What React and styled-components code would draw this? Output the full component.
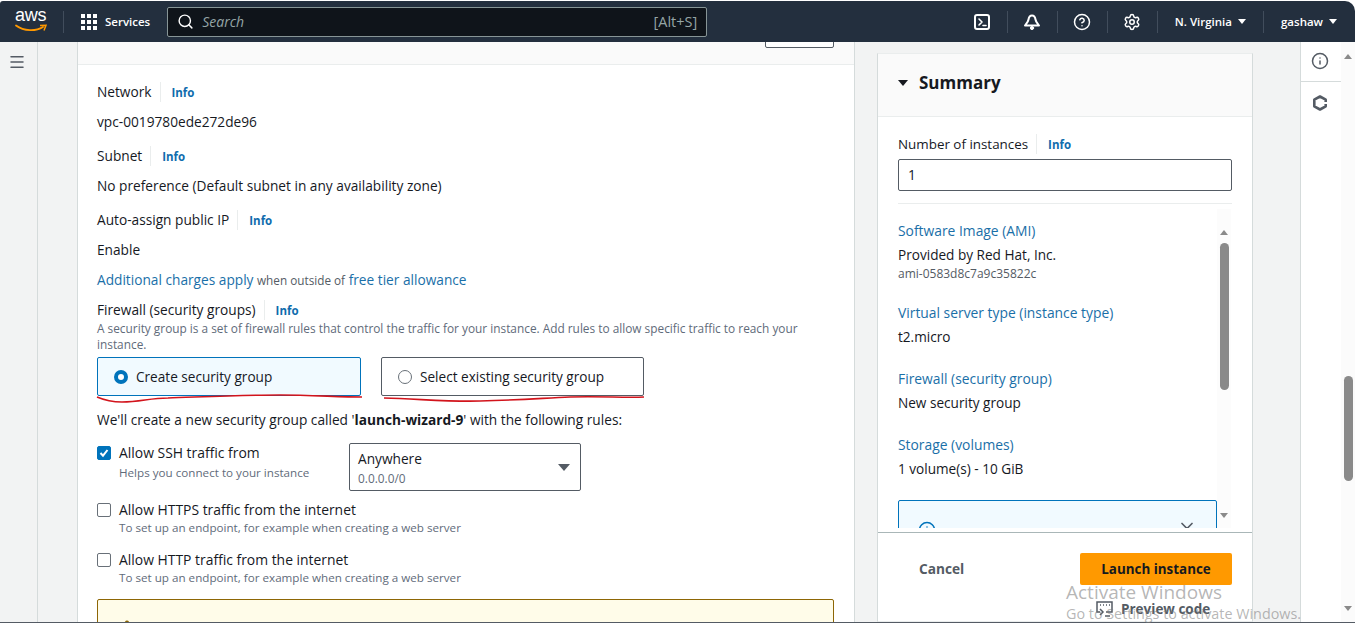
import React from 'react';
import styled, { createGlobalStyle } from 'styled-components';
import { Settings, CircleHelp, Info as InfoIcon, Search, ChevronDown, Menu, TriangleAlert } from 'lucide-react';

const GlobalStyle = createGlobalStyle`
    html, body {
        margin: 0;
        padding: 0;
        background: #fff;
        overflow: hidden;
    }
    * { box-sizing: border-box; }
`;

const Page = styled.div`
    position: relative;
    width: 1359px;
    height: 623px;
    overflow: hidden;
    font-family: "Open Sans", "Noto Sans", sans-serif;
    font-size: 13.7px;
    line-height: 20px;
    color: #16191f;
    background: #fff;
`;

const Frame = styled.div`
    width: 1355px;
    height: 623px;
    display: flex;
    flex-direction: column;
    border-bottom: 1px solid #545b64;
`;

const Header = styled.header`
    flex: none;
    height: 41px;
    margin-top: 1px;
    display: flex;
    align-items: center;
    background: #232f3e;
    border-top-right-radius: 10px;
    border-top-left-radius: 3px;
    color: #fff;
`;

const Logo = styled.div`
    position: relative;
    width: 32px;
    height: 26px;
    margin-left: 15px;
    flex: none;
`;

const LogoWord = styled.span`
    display: block;
    font-family: "Liberation Sans", sans-serif;
    font-size: 18px;
    line-height: 16px;
    letter-spacing: -0.3px;
    margin-top: -2px;
`;

const LogoSmile = styled.svg`
    position: absolute;
    left: 0;
    top: 15px;
`;

const Divider = styled.span`
    flex: none;
    width: 1px;
    height: 22px;
    background: #414d5c;
    margin-left: ${p => p.$left || 0}px;
`;

const Services = styled.div`
    display: flex;
    align-items: center;
    gap: 8px;
    margin-left: 17px;
    font-size: 11.5px;
    font-weight: 600;
`;

const SearchBox = styled.div`
    width: 540px;
    height: 30px;
    margin-left: 17px;
    padding: 0 9px;
    display: flex;
    align-items: center;
    background: #0f141a;
    border: 1px solid #879596;
    border-radius: 2px;
    font-size: 14px;
    color: #95a5a6;
`;

const SearchHint = styled.span`
    font-style: italic;
    margin-left: 8px;
    flex: 1;
`;

const ShortCut = styled.span`
    font-size: 14.5px;
`;

const HeaderRight = styled.div`
    margin-left: auto;
    display: flex;
    align-items: center;
`;

const HeaderIcon = styled.span`
    width: 49px;
    display: flex;
    justify-content: center;
    align-items: center;
`;

const HeaderMenu = styled.span`
    display: flex;
    align-items: center;
    gap: 6px;
    font-size: 11.5px;
    font-weight: 600;
    margin: ${p => p.$margin};
`;

const Caret = styled.span`
    display: inline-block;
    width: 0;
    height: 0;
    border-left: ${p => p.$size}px solid transparent;
    border-right: ${p => p.$size}px solid transparent;
    border-top: ${p => p.$size + 1}px solid ${p => p.$color || '#fff'};
`;

const Body = styled.div`
    flex: 1;
    min-height: 0;
    display: flex;
    background: #f2f3f3;
`;

const SideNav = styled.nav`
    flex: none;
    width: 38px;
    padding: 11px 0 0 8px;
    border-right: 1px solid #d5dbdb;
    color: #545b64;
`;

const Content = styled.main`
    flex: 1;
    min-width: 0;
    display: flex;
    align-items: stretch;
    padding-left: 39px;
`;

const LeftPanel = styled.section`
    flex: none;
    width: 778px;
    background: #fff;
    border-left: 1px solid #d5dbdb;
    border-right: 1px solid #d5dbdb;
    overflow: hidden;
`;

const PanelTop = styled.div`
    height: 23px;
    background: #fafafa;
    border-bottom: 1px solid #eaeded;
    position: relative;
`;

const CutButton = styled.div`
    position: absolute;
    left: 687px;
    top: -19px;
    width: 69px;
    height: 25px;
    background: #fff;
    border: 1px solid #545b64;
    border-radius: 2px;
`;

const PanelBody = styled.div`
    padding: 17px 20px 0 19px;
    display: flex;
    flex-direction: column;
`;

const Field = styled.div`
    display: flex;
    flex-direction: column;
    gap: 10px;
    margin-bottom: ${p => p.$gap ?? 14}px;
`;

const LabelRow = styled.div`
    display: flex;
    align-items: center;
`;

const Label = styled.span`
    padding-right: 8px;
    border-right: 1px solid #eaeded;
`;

const InfoLink = styled.a`
    margin-left: 11px;
    padding-top: 2px;
    font-size: 11.5px;
    line-height: 16px;
    font-weight: 700;
    color: #0f6cad;
`;

const Link = styled.a`
    color: #1a6fa8;
`;

const SmallText = styled.span`
    font-size: 11.75px;
    color: #545b64;
`;

const Hint = styled.div`
    font-size: 11.85px;
    line-height: 16px;
    color: #5f6b7a;
`;

const CheckHint = styled(Hint)`
    font-size: 11.65px;
    margin-top: ${p => p.$top || 0}px;
`;

const RadioRow = styled.div`
    display: flex;
    gap: 20px;
    margin: 5px 0 14px;
`;

const RadioCard = styled.div`
    height: 39px;
    width: ${p => p.$width}px;
    padding-left: ${p => p.$pad}px;
    display: flex;
    align-items: center;
    gap: 8px;
    background: ${p => p.$on ? '#f1faff' : '#fff'};
    border: 1px solid ${p => p.$on ? '#0073bb' : '#545b64'};
    border-radius: 2px;
    font-size: 13.6px;
`;

const RadioDot = styled.span`
    width: 14px;
    height: 14px;
    flex: none;
    border-radius: 50%;
    background: #fff;
    border: ${p => p.$on ? '4px solid #0073bb' : '1px solid #687078'};
`;

const SshRow = styled.div`
    display: flex;
    align-items: flex-start;
    margin-bottom: 9px;
`;

const CheckRow = styled.div`
    display: flex;
    gap: 8px;
    width: 252px;
    margin-bottom: ${p => p.$gap || 0}px;
`;

const CheckBox = styled.span`
    width: 14px;
    height: 14px;
    margin-top: 3px;
    flex: none;
    display: flex;
    align-items: center;
    justify-content: center;
    border-radius: 2px;
    background: ${p => p.$on ? '#0073bb' : '#fff'};
    border: 1px solid ${p => p.$on ? '#0073bb' : '#687078'};
`;

const CheckText = styled.div`
    font-size: 13.9px;
    white-space: nowrap;
`;

const SelectBox = styled.div`
    width: 232px;
    height: 48px;
    padding: 4px 11px 0 8px;
    position: relative;
    background: #fff;
    border: 1px solid #545b64;
    border-radius: 2px;
    font-size: 13.7px;
`;

const SelectValue = styled.div`
    line-height: 21px;
    margin-bottom: 1px;
`;

const SelectCaret = styled.span`
    position: absolute;
    right: 10px;
    top: 20px;
    display: flex;
`;

const WarningBox = styled.div`
    margin-top: 2px;
    height: 40px;
    padding: 19px 0 0 20px;
    background: #fffce9;
    border: 1px solid #8d6605;
    border-radius: 2px;
    color: #8d6605;
`;

const SummaryWrap = styled.aside`
    flex: none;
    width: 376px;
    margin: 11px 0 0 22px;
    background: #fff;
    border: 1px solid #eaeded;
    border-left: 1px solid #d5dbdb;
    border-right: 1px solid #d5dbdb;
    display: flex;
    flex-direction: column;
`;

const SummaryHead = styled.div`
    height: 63px;
    flex: none;
    display: flex;
    align-items: center;
    gap: 11px;
    padding: 0 0 4px 20px;
    background: #fafafa;
    border-bottom: 1px solid #eaeded;
    font-size: 17px;
    font-weight: 700;
`;

const SummaryBody = styled.div`
    padding: 17px 20px 0;
    flex: none;
    font-size: 13.4px;
`;

const NumberInput = styled.div`
    height: 32px;
    margin-top: 5px;
    padding: 5px 9px;
    background: #fff;
    border: 1px solid #545b64;
    border-radius: 2px;
    font-size: 13.7px;
`;

const Rule = styled.div`
    height: 1px;
    margin-top: 12px;
    background: #eaeded;
`;

const ScrollArea = styled.div`
    height: 319px;
    margin-top: 5px;
    margin-right: 21px;
    padding-left: 20px;
    flex: none;
    display: flex;
    overflow: hidden;
`;

const ScrollList = styled.div`
    width: 319px;
    padding-top: 12px;
    flex: none;
`;

const SummaryItem = styled.div`
    margin-bottom: ${p => p.$gap}px;
    font-size: 13.6px;
`;

const ItemLink = styled(Link)`
    display: block;
    margin-bottom: 4px;
    font-size: 13.85px;
`;

const AmiId = styled.div`
    margin-top: 1px;
    font-size: 12px;
    line-height: 16px;
    color: #545b64;
`;

const NoticeBox = styled.div`
    position: relative;
    height: 60px;
    margin-top: -1px;
    background: #f1faff;
    border: 1px solid #0073bb;
    border-radius: 2px;
`;

const NoticeIcon = styled.span`
    position: absolute;
    left: 19px;
    top: 20px;
    display: flex;
    color: #0073bb;
`;

const NoticeChevron = styled.span`
    position: absolute;
    right: 19px;
    top: 15px;
    display: flex;
    color: #545b64;
`;

const Track = styled.div`
    flex: 1;
    padding-top: 21px;
    background: #fcfcfc;
    display: flex;
    flex-direction: column;
    align-items: center;
`;

const TrackThumb = styled.div`
    flex: none;
    width: ${p => p.$width}px;
    height: ${p => p.$height}px;
    margin-top: ${p => p.$top}px;
    background: #8a8a8a;
    border-radius: 5px;
`;

const TrackArrow = styled.span`
    flex: none;
    width: 0;
    height: 0;
    border-left: 4.5px solid transparent;
    border-right: 4.5px solid transparent;
    ${p => p.$down ? 'border-top' : 'border-bottom'}: 5px solid #8a8a8a;
    margin-top: ${p => p.$top || 0}px;
`;

const SummaryFoot = styled.div`
    flex: 1;
    margin-top: 4px;
    border-top: 1px solid #aab7b8;
    padding: 20px 20px 0;
    position: relative;
`;

const FootRow = styled.div`
    display: flex;
    justify-content: space-between;
    align-items: center;
`;

const CancelButton = styled.span`
    margin-left: 21px;
    font-size: 13.7px;
    font-weight: 700;
    color: #545b64;
`;

const LaunchButton = styled.span`
    width: 152px;
    height: 32px;
    display: flex;
    align-items: center;
    justify-content: center;
    background: #ff9900;
    border-radius: 2px;
    font-size: 13.4px;
    font-weight: 700;
    color: #16191f;
`;

const PreviewCode = styled.div`
    margin-top: 14px;
    padding-left: 198px;
    display: flex;
    align-items: center;
    gap: 8px;
    font-size: 13.5px;
    font-weight: 700;
    color: #545b64;
`;

const ToolRail = styled.div`
    flex: none;
    width: 41px;
    margin-left: 47px;
    background: #fff;
    border-left: 1px solid #d5dbdb;
    padding: 10px 2px 0 0;
    display: flex;
    flex-direction: column;
    align-items: center;
    color: #545b64;
`;

const RailDivider = styled.div`
    align-self: flex-start;
    width: 40px;
    height: 1px;
    margin: 11px 0 13px;
    background: #d5dbdb;
`;

const PageScroll = styled.div`
    flex: none;
    width: 14px;
    padding-top: 12px;
    background: #fbfbfb;
    display: flex;
    flex-direction: column;
    align-items: center;
`;

const Scribble = styled.svg`
    position: absolute;
    left: 0;
    top: 0;
    pointer-events: none;
`;

const Watermark = styled.div`
    position: absolute;
    left: 1066px;
    top: 579px;
    color: rgba(120, 120, 120, 0.55);
    pointer-events: none;
    white-space: nowrap;
`;

const WatermarkTitle = styled.div`
    font-size: 19px;
    line-height: 26px;
`;

const WatermarkSub = styled.div`
    font-size: 14.35px;
    line-height: 18px;
`;

const HeadIconOutline = ({ children }) => (
    <svg width="18" height="18" viewBox="0 0 18 18" fill="none" stroke="#fff" strokeWidth="2" strokeLinejoin="round" strokeLinecap="round">
        {children}
    </svg>
);

const fields = [
    { label: 'Network', value: 'vpc-0019780ede272de96', gap: 14 },
    { label: 'Subnet', value: 'No preference (Default subnet in any availability zone)', gap: 14 },
    { label: 'Auto-assign public IP', value: 'Enable', gap: 10 },
];

const summaryItems = [
    { title: 'Software Image (AMI)', text: 'Provided by Red Hat, Inc.', sub: 'ami-0583d8c7a9c35822c', gap: 21 },
    { title: 'Virtual server type (instance type)', text: 't2.micro', gap: 22 },
    { title: 'Firewall (security group)', text: 'New security group', gap: 22 },
    { title: 'Storage (volumes)', text: '1 volume(s) - 10 GiB', gap: 22 },
];

const TickMark = () => (
    <svg width="10" height="10" viewBox="0 0 10 10" fill="none" stroke="#fff" strokeWidth="2">
        <path d="M1.5 5 L4 7.7 L8.5 2" />
    </svg>
);

const App = () => {
    return (
        <Page>
            <GlobalStyle />
            <Frame>
                <Header>
                    <Logo>
                        <LogoWord>aws</LogoWord>
                        <LogoSmile width="32" height="9" viewBox="0 0 32 9" fill="none">
                            <path d="M1 1.5 C9 7.5 21 7.5 28 3" stroke="#ff9900" strokeWidth="1.8" strokeLinecap="round" />
                            <path d="M25 1.5 L31 1.2 L29 6.5" stroke="#ff9900" strokeWidth="1.5" />
                        </LogoSmile>
                    </Logo>
                    <Divider $left={16} />
                    <Services>
                        <svg width="16" height="16" viewBox="0 0 16 16" fill="#fff">
                            {[0, 6, 12].map(x => [0, 6, 12].map(y => (
                                <rect key={`${x}-${y}`} x={x} y={y} width="4" height="4" />
                            )))}
                        </svg>
                        Services
                    </Services>
                    <SearchBox>
                        <Search size={17} color="#fff" strokeWidth={2} />
                        <SearchHint>Search</SearchHint>
                        <ShortCut>[Alt+S]</ShortCut>
                    </SearchBox>
                    <HeaderRight>
                        <HeaderIcon>
                            <HeadIconOutline>
                                <rect x="2" y="2" width="14" height="14" rx="2" />
                                <path d="M6 6 L9 9 L6 12 M10 12.5 H13" strokeWidth="1.6" />
                            </HeadIconOutline>
                        </HeaderIcon>
                        <Divider />
                        <HeaderIcon>
                            <HeadIconOutline>
                                <path d="M9 2.5 C6.5 2.5 5.8 4.5 5.5 6.5 C5.2 8.8 3.5 10.5 2 12.5 H16 C14.5 10.5 12.8 8.8 12.5 6.5 C12.2 4.5 11.5 2.5 9 2.5 Z" />
                                <circle cx="9" cy="15" r="1.6" fill="#fff" strokeWidth="1" />
                            </HeadIconOutline>
                        </HeaderIcon>
                        <Divider />
                        <HeaderIcon><CircleHelp size={18} strokeWidth={2} /></HeaderIcon>
                        <Divider />
                        <HeaderIcon><Settings size={18} strokeWidth={2} /></HeaderIcon>
                        <Divider />
                        <HeaderMenu $margin="0 17px 0 17px">N. Virginia <Caret $size={4.5} /></HeaderMenu>
                        <Divider />
                        <HeaderMenu $margin="0 18px 0 17px">gashaw <Caret $size={4.5} /></HeaderMenu>
                    </HeaderRight>
                </Header>
                <Body>
                    <SideNav><Menu size={18} strokeWidth={2} /></SideNav>
                    <Content>
                        <LeftPanel>
                            <PanelTop><CutButton /></PanelTop>
                            <PanelBody>
                                {fields.map(f => (
                                    <Field key={f.label} $gap={f.gap}>
                                        <LabelRow>
                                            <Label>{f.label}</Label>
                                            <InfoLink>Info</InfoLink>
                                        </LabelRow>
                                        <div>{f.value}</div>
                                    </Field>
                                ))}
                                <Field $gap={10}>
                                    <div>
                                        <Link>Additional charges apply</Link> <SmallText>when outside of</SmallText> <Link>free tier allowance</Link>
                                    </div>
                                </Field>
                                <LabelRow>
                                    <Label>Firewall (security groups)</Label>
                                    <InfoLink>Info</InfoLink>
                                </LabelRow>
                                <Hint>A security group is a set of firewall rules that control the traffic for your instance. Add rules to allow specific traffic to reach your instance.</Hint>
                                <RadioRow>
                                    <RadioCard $on $width={264} $pad={16}><RadioDot $on />Create security group</RadioCard>
                                    <RadioCard $width={263} $pad={16}><RadioDot />Select existing security group</RadioCard>
                                </RadioRow>
                                <Field $gap={13}>
                                    <div>We'll create a new security group called '<b>launch-wizard-9</b>' with the following rules:</div>
                                </Field>
                                <SshRow>
                                    <CheckRow>
                                        <CheckBox $on><TickMark /></CheckBox>
                                        <CheckText>
                                            Allow SSH traffic from
                                            <CheckHint $top={2}>Helps you connect to your instance</CheckHint>
                                        </CheckText>
                                    </CheckRow>
                                    <SelectBox>
                                        <SelectValue>Anywhere</SelectValue>
                                        <Hint>0.0.0.0/0</Hint>
                                        <SelectCaret><Caret $size={6} $color="#545b64" /></SelectCaret>
                                    </SelectBox>
                                </SshRow>
                                <CheckRow $gap={14}>
                                    <CheckBox />
                                    <CheckText>
                                        Allow HTTPS traffic from the internet
                                        <CheckHint>To set up an endpoint, for example when creating a web server</CheckHint>
                                    </CheckText>
                                </CheckRow>
                                <CheckRow $gap={11}>
                                    <CheckBox />
                                    <CheckText>
                                        Allow HTTP traffic from the internet
                                        <CheckHint>To set up an endpoint, for example when creating a web server</CheckHint>
                                    </CheckText>
                                </CheckRow>
                                <WarningBox><TriangleAlert size={18} strokeWidth={2} /></WarningBox>
                            </PanelBody>
                        </LeftPanel>
                        <SummaryWrap>
                            <SummaryHead><Caret $size={5} $color="#16191f" />Summary</SummaryHead>
                            <SummaryBody>
                                <LabelRow>
                                    <Label>Number of instances</Label>
                                    <InfoLink>Info</InfoLink>
                                </LabelRow>
                                <NumberInput>1</NumberInput>
                                <Rule />
                            </SummaryBody>
                            <ScrollArea>
                                <ScrollList>
                                    {summaryItems.map(item => (
                                        <SummaryItem key={item.title} $gap={item.gap}>
                                            <ItemLink>{item.title}</ItemLink>
                                            <div>{item.text}</div>
                                            {item.sub && <AmiId>{item.sub}</AmiId>}
                                        </SummaryItem>
                                    ))}
                                    <NoticeBox>
                                        <NoticeIcon><InfoIcon size={18} strokeWidth={2} /></NoticeIcon>
                                        <NoticeChevron><ChevronDown size={20} strokeWidth={2} /></NoticeChevron>
                                    </NoticeBox>
                                </ScrollList>
                                <Track>
                                    <TrackArrow />
                                    <TrackThumb $width={9} $height={147} $top={8} />
                                    <TrackArrow $down $top={123} />
                                </Track>
                            </ScrollArea>
                            <SummaryFoot>
                                <FootRow>
                                    <CancelButton>Cancel</CancelButton>
                                    <LaunchButton>Launch instance</LaunchButton>
                                </FootRow>
                                <PreviewCode>
                                    <svg width="17" height="16" viewBox="0 0 17 16" fill="none" stroke="#545b64" strokeWidth="1.5">
                                        <path d="M4 11 H1 V1 H16 V11 H10" />
                                        <path d="M4 4 h1 M7 4 h1 M10 4 h1 M13 4 h1" />
                                        <path d="M4 8 L7 11 L4 14 M9 15 H14" />
                                    </svg>
                                    Preview code
                                </PreviewCode>
                            </SummaryFoot>
                        </SummaryWrap>
                        <ToolRail>
                            <InfoIcon size={18} strokeWidth={2} />
                            <RailDivider />
                            <svg width="16" height="16" viewBox="0 0 16 16" fill="none" stroke="#545b64" strokeWidth="2.6" strokeLinejoin="round">
                                <path d="M8 1.5 L13.7 4.7 V11.3 L8 14.5 L2.3 11.3 V4.7 Z" />
                                <path d="M7.5 8 H15.5" stroke="#fff" strokeWidth="2" />
                            </svg>
                        </ToolRail>
                    </Content>
                    <PageScroll>
                        <TrackArrow />
                        <TrackThumb $width={9} $height={105} $top={317} />
                        <TrackArrow $down $top={125} />
                    </PageScroll>
                </Body>
            </Frame>
            <Scribble width="1359" height="623" viewBox="0 0 1359 623" fill="none" stroke="#d2141c" strokeWidth="1.6">
                <path d="M97 397 C104 400 110 402 122 402 C140 402 150 398 168 398 C200 397 240 395 280 395 C310 395 340 397 362 397" />
                <path d="M384 398 C420 399 450 402 480 401 C520 400 545 398 570 397 C600 396 625 398 644 397" />
            </Scribble>
            <Watermark>
                <WatermarkTitle>Activate Windows</WatermarkTitle>
                <WatermarkSub>Go to Settings to activate Windows.</WatermarkSub>
            </Watermark>
        </Page>
    );
};

export default App;
